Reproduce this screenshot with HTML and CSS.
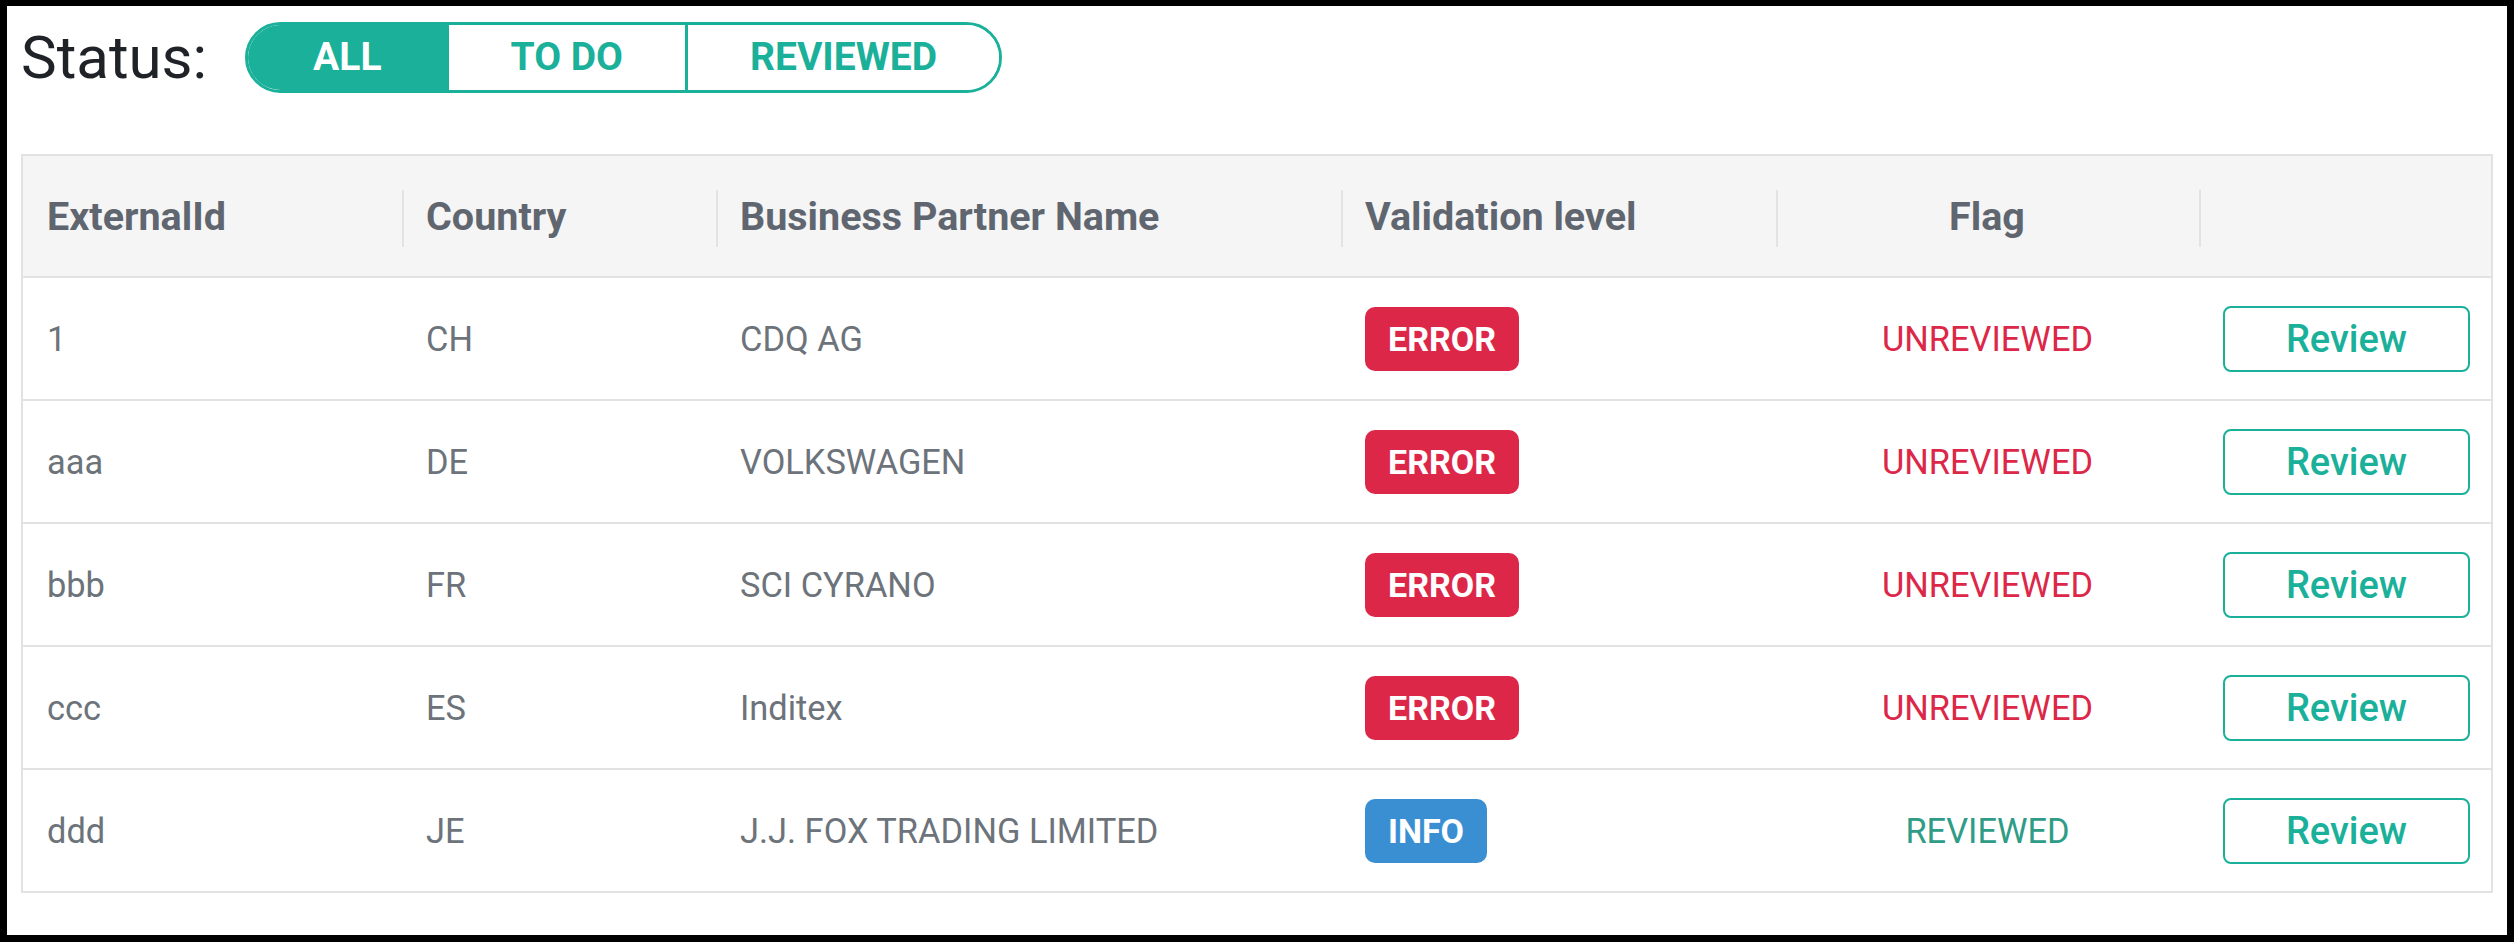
FILE: index.html
```html
<!DOCTYPE html>
<html lang="en">
<head>
<meta charset="utf-8">
<title>Status</title>
<link rel="stylesheet" href="styles.css">
</head>
<body>
<div class="frame">
  <div class="toolbar">
    <span class="status-label">Status:</span>
    <div class="seg">
      <button class="seg-btn active">ALL</button>
      <button class="seg-btn">TO DO</button>
      <button class="seg-btn">REVIEWED</button>
    </div>
  </div>
  <table class="grid">
    <colgroup>
      <col class="c1"><col class="c2"><col class="c3"><col class="c4"><col class="c5"><col class="c6">
    </colgroup>
    <thead>
      <tr>
        <th>ExternalId</th>
        <th class="sep">Country</th>
        <th class="sep">Business Partner Name</th>
        <th class="sep">Validation level</th>
        <th class="sep center">Flag</th>
        <th class="sep"></th>
      </tr>
    </thead>
    <tbody>
      <tr>
        <td>1</td><td>CH</td><td>CDQ AG</td>
        <td><span class="badge error">ERROR</span></td>
        <td class="center unrev">UNREVIEWED</td>
        <td class="act"><button class="review">Review</button></td>
      </tr>
      <tr>
        <td>aaa</td><td>DE</td><td>VOLKSWAGEN</td>
        <td><span class="badge error">ERROR</span></td>
        <td class="center unrev">UNREVIEWED</td>
        <td class="act"><button class="review">Review</button></td>
      </tr>
      <tr>
        <td>bbb</td><td>FR</td><td>SCI CYRANO</td>
        <td><span class="badge error">ERROR</span></td>
        <td class="center unrev">UNREVIEWED</td>
        <td class="act"><button class="review">Review</button></td>
      </tr>
      <tr>
        <td>ccc</td><td>ES</td><td>Inditex</td>
        <td><span class="badge error">ERROR</span></td>
        <td class="center unrev">UNREVIEWED</td>
        <td class="act"><button class="review">Review</button></td>
      </tr>
      <tr>
        <td>ddd</td><td>JE</td><td>J.J. FOX TRADING LIMITED</td>
        <td><span class="badge info">INFO</span></td>
        <td class="center rev">REVIEWED</td>
        <td class="act"><button class="review">Review</button></td>
      </tr>
    </tbody>
  </table>
</div>
</body>
</html>
```

FILE: styles.css
```css
html {
  background: #000;
}
body {
  margin: 0;
  font-family: Roboto, "Liberation Sans", sans-serif;
}
.frame {
  margin: 6px 7px 7px 7px;
  height: 929px;
  box-sizing: border-box;
  background: #fff;
  padding: 16px 16px 0 14px;
}
.toolbar {
  display: flex;
  align-items: center;
  gap: 38px;
  height: 71px;
}
.status-label {
  font-size: 60px;
  color: #1f2327;
  line-height: 1;
}
.seg {
  display: flex;
  height: 71px;
  border: 3px solid #1ab09a;
  border-radius: 36px;
  overflow: hidden;
  box-sizing: border-box;
}
.seg-btn {
  font-family: Roboto, "Liberation Sans", sans-serif;
  font-weight: 700;
  font-size: 39px;
  color: #1ab09a;
  background: #fff;
  border: 0;
  border-left: 3px solid #1ab09a;
  padding: 0 62px;
  margin: 0;
  line-height: 1;
}
.seg-btn:first-child {
  border-left: 0;
  padding: 0 64px 0 65px;
}
.seg-btn.active {
  background: #1ab09a;
  color: #fff;
}
.grid {
  margin-top: 61px;
  width: 2470px;
  table-layout: fixed;
  border-collapse: collapse;
  border: 2px solid #e2e2e2;
}
.c1 { width: 380px; }
.c2 { width: 314px; }
.c3 { width: 625px; }
.c4 { width: 435px; }
.c5 { width: 423px; }
.c6 { width: 293px; }
.grid th {
  height: 120px;
  background: #f5f5f5;
  text-align: left;
  font-size: 39.5px;
  font-weight: 700;
  color: #5f6670;
  padding: 0 25px 0 24px;
  position: relative;
  border-bottom: 2px solid #e2e2e2;
  white-space: nowrap;
}
.grid th.sep::before {
  content: "";
  position: absolute;
  left: 0;
  top: 34px;
  height: 57px;
  width: 2px;
  background: #e3e3e3;
}
.grid td {
  height: 121px;
  padding: 0 24px;
  font-size: 34.4px;
  color: #6c737a;
  border-bottom: 2px solid #e2e2e2;
  white-space: nowrap;
}
.grid tbody tr:last-child td {
  border-bottom: 0;
}
.grid .center {
  text-align: center;
}
.grid td.act {
  padding: 0 21px 0 24px;
}
.badge {
  display: inline-block;
  color: #fff;
  font-weight: 700;
  font-size: 34px;
  line-height: 1;
  padding: 15px 23px;
  border-radius: 10px;
}
.badge.error {
  background: #dc2748;
}
.badge.info {
  background: #3a8fd3;
}
.grid td.unrev {
  color: #dc2748;
}
.grid td.rev {
  color: #2e9c86;
}
.review {
  display: block;
  width: 100%;
  height: 66px;
  box-sizing: border-box;
  background: #fff;
  border: 2px solid #1ab09a;
  border-radius: 8px;
  color: #1ab09a;
  font-family: Roboto, "Liberation Sans", sans-serif;
  font-weight: 500;
  font-size: 38px;
  padding: 0;
}
```
